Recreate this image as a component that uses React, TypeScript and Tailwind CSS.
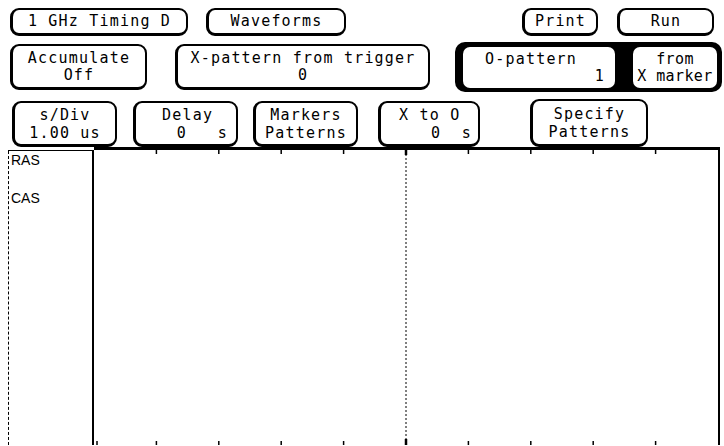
import type { ReactNode } from 'react';

const mono = "font-['DejaVu_Sans_Mono','Liberation_Mono',monospace] text-[15px] leading-[17px] tracking-[1.2px] text-black";

function Key({ className = '', children }: { className?: string; children: ReactNode }) {
  return (
    <div
      className={`flex flex-col justify-center rounded-[9px] border-2 border-b-[3px] border-l-[3px] border-black bg-white ${className}`}
    >
      {children}
    </div>
  );
}

export default function App() {
  const ticks = [1, 2, 3, 4, 6, 7, 8, 9];

  return (
    <div className={`h-[446px] w-[724px] overflow-hidden bg-white ${mono}`}>
      {/* top row */}
      <div className="mt-[8px] flex h-[28px] items-stretch">
        <Key className="ml-[10px] w-[178px] items-center">1 GHz Timing D</Key>
        <Key className="ml-[18px] w-[140px] items-center">Waveforms</Key>
        <Key className="ml-[176px] w-[76px] items-center">Print</Key>
        <Key className="ml-[19px] w-[97px] items-center">Run</Key>
      </div>

      {/* second row */}
      <div className="mt-[6px] flex h-[50px] items-center">
        <Key className="ml-[10px] h-[46px] w-[137px] items-center">
          <span>Accumulate</span>
          <span>Off</span>
        </Key>
        <Key className="ml-[28px] h-[46px] w-[255px] items-center">
          <span>X-pattern from trigger</span>
          <span>0</span>
        </Key>
        <div className="ml-[25px] flex h-[50px] w-[267px] gap-[18px] rounded-[10px] bg-black pb-[4px] pl-[8px] pr-[5px] pt-[5px]">
          <div className="flex w-[152px] flex-col justify-center rounded-[7px] bg-white">
            <span className="pl-[22px]">O-pattern</span>
            <span className="pr-[10px] text-right">1</span>
          </div>
          <div className="flex flex-1 flex-col items-center justify-center whitespace-nowrap rounded-[7px] bg-white tracking-[0.4px]">
            <span>from</span>
            <span>X marker</span>
          </div>
        </div>
      </div>

      {/* third row */}
      <div className="mt-[7px] flex h-[48px] items-end leading-[18px]">
        <Key className="ml-[12px] h-[46px] w-[105px] items-center">
          <span>s/Div</span>
          <span>1.00 us</span>
        </Key>
        <Key className="ml-[16px] h-[46px] w-[105px]">
          <span className="pl-[26px]">Delay</span>
          <span className="whitespace-pre pr-[8px] text-right">0   s</span>
        </Key>
        <Key className="ml-[15px] h-[46px] w-[105px] items-center">
          <span>Markers</span>
          <span>Patterns</span>
        </Key>
        <Key className="ml-[20px] h-[46px] w-[102px]">
          <span className="pl-[18px]">X to O</span>
          <span className="whitespace-pre pr-[6px] text-right">0  s</span>
        </Key>
        <Key className="ml-[50px] h-[48px] w-[118px] items-center border-b-4 border-l-4">
          <span>Specify</span>
          <span>Patterns</span>
        </Key>
      </div>

      {/* waveform area */}
      <div className="flex h-[298px]">
        <div className="ml-[8px] mt-[3px] w-[86px] border-r-2 border-t border-black">
          <div className="flex h-full flex-col border-l border-dashed border-black font-['Liberation_Sans',sans-serif] text-[14px] leading-[16px] tracking-normal">
            <span className="pl-[2px] pt-[1px]">RAS</span>
            <span className="pl-[2px] pt-[22px]">CAS</span>
          </div>
        </div>
        <div className="relative w-[626px] border-r-2 border-t-[3px] border-black">
          <svg className="absolute inset-0 h-full w-full" viewBox="0 0 624 295" preserveAspectRatio="none">
            <line x1="312" y1="0" x2="312" y2="295" stroke="black" strokeWidth="1" strokeDasharray="2 2" />
            {ticks.map((i) => (
              <g key={i}>
                <line x1={i * 62.4} y1="0" x2={i * 62.4} y2="4" stroke="black" strokeWidth="1.5" />
                <line x1={i * 62.4} y1="295" x2={i * 62.4} y2="291" stroke="black" strokeWidth="1.5" />
              </g>
            ))}
            <line x1="312" y1="0" x2="312" y2="5" stroke="black" strokeWidth="2.5" />
            <line x1="312" y1="295" x2="312" y2="289" stroke="black" strokeWidth="2.5" />
            <line x1="3" y1="295" x2="3" y2="291" stroke="black" strokeWidth="1.5" />
          </svg>
        </div>
      </div>
    </div>
  );
}
